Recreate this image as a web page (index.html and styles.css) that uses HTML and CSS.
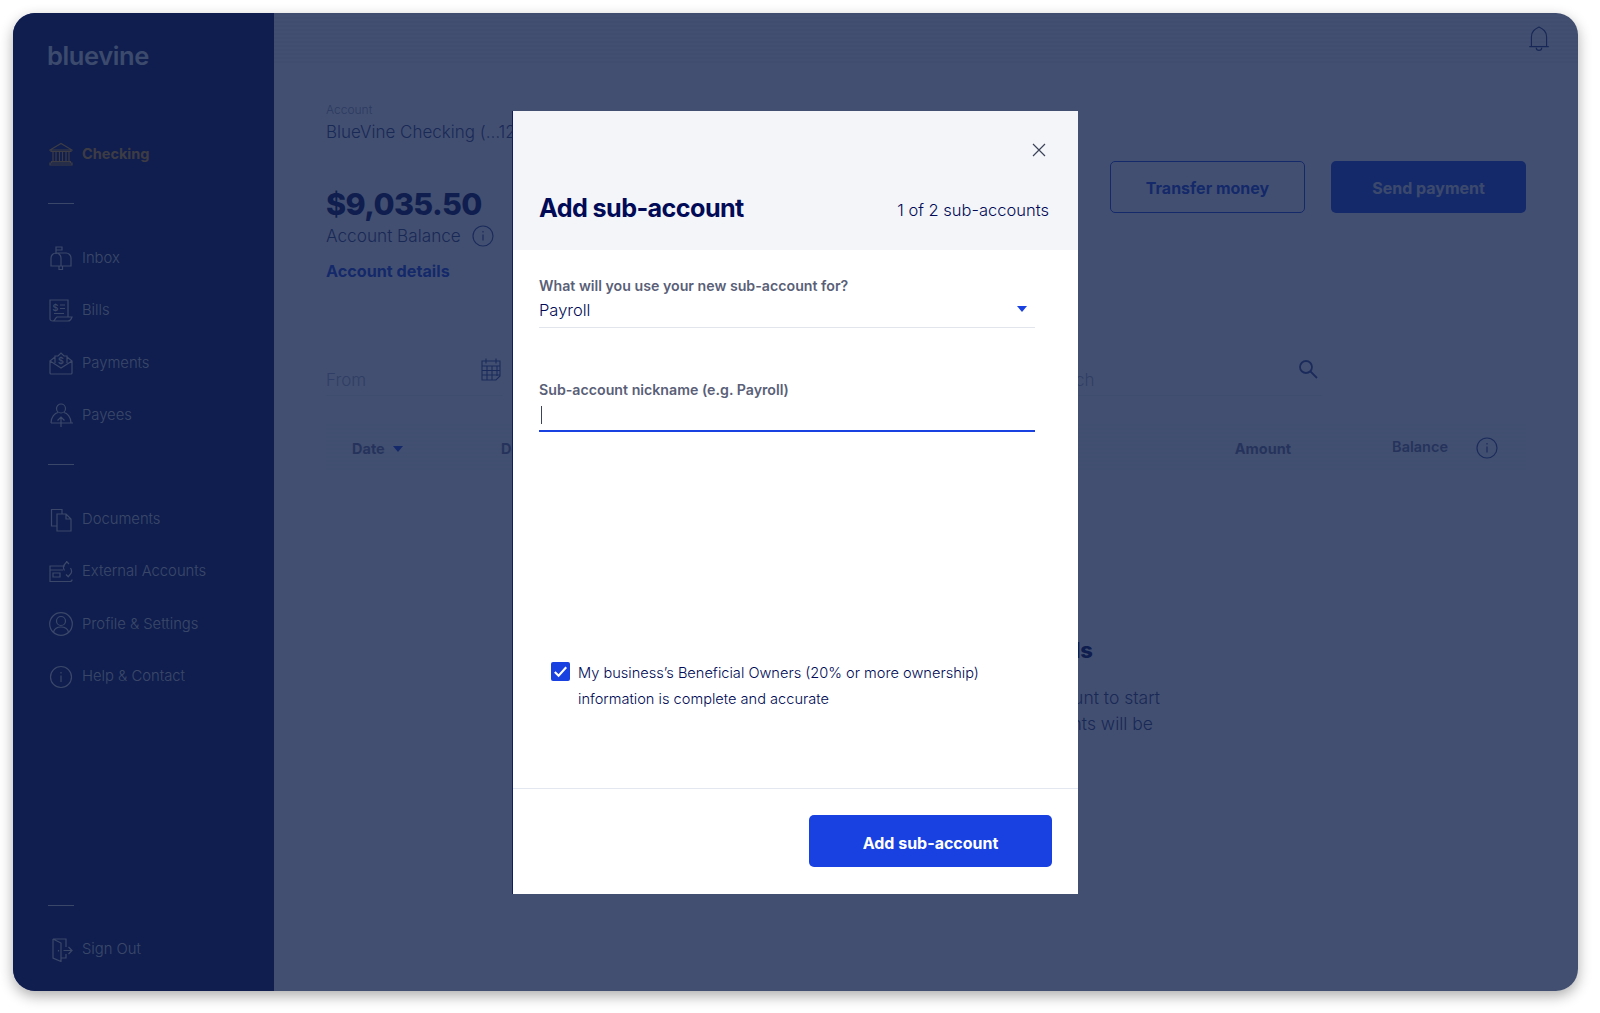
FILE: index.html
```html
<!DOCTYPE html>
<html lang="en">
<head>
<meta charset="utf-8">
<title>Bluevine - Add sub-account</title>
<link rel="stylesheet" href="styles.css">
</head>
<body>
<div class="window">
  <aside class="sidebar">
    <div class="logo">bluevine</div>
    <nav class="nav">
      <a class="nav-item active">
        <svg class="nav-icon" viewBox="0 0 24 24"><path d="M1 8 12 1.500 23 8ZM2 8v1.500h20V8M4 10v9M7 10v9M10.500 10v9M13.500 10v9M17 10v9M20 10v9M2.500 19.500h19v1.500h-19ZM1 21h22v2H1Z"/></svg>
        <span>Checking</span>
      </a>
      <div class="nav-sep"></div>
      <a class="nav-item">
        <svg class="nav-icon" viewBox="0 0 24 24"><path d="M7 8V1h6v3H7M2 20v-8a5 5 0 0 1 5-5 5 5 0 0 1 5 5v8ZM7 7h10a5 5 0 0 1 5 5v8H12M10 20v3.500h3.500V20"/></svg>
        <span>Inbox</span>
      </a>
      <a class="nav-item">
        <svg class="nav-icon" viewBox="0 0 24 24"><path d="M4 22c-2 0-3-1-3-2V1h18v17M4 22c2 0 2-3 4-4h15c-1 3-2 4-4 4ZM5 14.500h10M11 6h5M11 9.500h5"/><text class="bill-sign" x="3.500" y="11.500">$</text></svg>
        <span>Bills</span>
      </a>
      <a class="nav-item">
        <svg class="nav-icon" viewBox="0 0 24 24"><path d="M1 10v12a1 1 0 0 0 1 1h20a1 1 0 0 0 1-1V10l-5-4M6 6l-5 4 11 7 11-7M6 12V5h3l3-3 3 3h3v7"/><text class="bill-sign" x="9" y="12.500">$</text></svg>
        <span>Payments</span>
      </a>
      <a class="nav-item">
        <svg class="nav-icon" viewBox="0 0 24 24"><circle cx="12" cy="5.500" r="4.500"/><path d="M2 20c0-6 4-10 7-10.500M22 20c0-6-4-10-7-10.500M2 20h22M12 24V14M8.500 17.500 12 14l3.500 3.500"/></svg>
        <span>Payees</span>
      </a>
      <div class="nav-sep"></div>
      <a class="nav-item">
        <svg class="nav-icon" viewBox="0 0 24 24"><path d="M8 18H2.500V1.500H13V6M8 6v17h14V11l-5-5ZM17 6v5h5"/></svg>
        <span>Documents</span>
      </a>
      <a class="nav-item">
        <svg class="nav-icon" viewBox="0 0 24 24"><path d="M16 6H1v15.500h20a2 2 0 0 0 2-2M1 10h13M4 13h7v4H4ZM18 1.500 15 5c-1 2-.5 4 .5 5.500M17.500 1.500 20 4M19 17l3-3.500c1-2 .5-4-.5-5.500M19.500 17 17 14.500"/></svg>
        <span>External Accounts</span>
      </a>
      <a class="nav-item">
        <svg class="nav-icon" viewBox="0 0 24 24"><circle cx="12" cy="12" r="11.300"/><circle cx="12" cy="9" r="4.500"/><path d="M4.500 20c1-3.500 4-5 7.500-5s6.500 1.500 7.500 5"/></svg>
        <span>Profile &amp; Settings</span>
      </a>
      <a class="nav-item">
        <svg class="nav-icon" viewBox="0 0 24 24"><circle cx="12" cy="12" r="10.500"/><path d="M12 10.500V17M12 7v1.500"/></svg>
        <span>Help &amp; Contact</span>
      </a>
    </nav>
    <div class="nav-bottom">
      <div class="nav-sep"></div>
      <a class="nav-item">
        <svg class="nav-icon" viewBox="0 0 24 24"><path d="M4 1v19l8 3.500V5L4 1h13v8M12 20h5v-4M14.500 12.500H23M19.500 9l3.500 3.500-3.500 3.500M9.500 12v1.500"/></svg>
        <span>Sign Out</span>
      </a>
    </div>
  </aside>

  <main class="main">
    <header class="topbar">
      <svg class="bell" viewBox="0 0 20 24"><path d="M10 1c-4 2-7 4-7 9v9H1h18-2v-9c0-5-3-7-7-9ZM7.500 20a2.500 2.500 0 0 0 5 0"/></svg>
    </header>
    <div class="content">
      <section class="summary">
        <div class="account">
          <div class="account-label">Account</div>
          <div class="account-name">BlueVine Checking (…1234)</div>
          <div class="amount">$9,035.50</div>
          <div class="balance-row">
            <span>Account Balance</span>
            <svg class="info" viewBox="0 0 22 22"><circle cx="11" cy="11" r="10"/><path d="M11 9.500v6M11 6v1.500"/></svg>
          </div>
          <a class="details-link">Account details</a>
        </div>
        <div class="actions">
          <a class="btn btn-outline">Transfer money</a>
          <a class="btn btn-solid">Send payment</a>
        </div>
      </section>

      <section class="filters">
        <div class="field field-from">
          <span>From</span>
          <svg class="cal" viewBox="0 0 22 24"><path d="M2 4h18v15l-4 4H2ZM2 9h18M7 9v14M12 9v14M17 9v10M2 13.500h18M2 18h18M6 1.500v5M16 1.500v5"/></svg>
        </div>
        <div class="field field-search">
          <span>Search</span>
          <svg class="search" viewBox="0 0 20 20"><circle cx="8" cy="8" r="6"/><path d="m12.500 12.500 6.500 6.500"/></svg>
        </div>
      </section>

      <section class="table-head">
        <div class="th th-date">Date <i class="sort"></i></div>
        <div class="th th-desc">Description</div>
        <div class="th th-amount">Amount</div>
        <div class="th th-balance">Balance</div>
        <svg class="info info-table" viewBox="0 0 22 22"><circle cx="11" cy="11" r="10"/><path d="M11 9.500v6M11 6v1.500"/></svg>
      </section>

      <section class="empty">
        <h2>details</h2>
        <p class="empty-line">your account to start</p>
        <p class="empty-line empty-line-second">payments will be</p>
      </section>
    </div>
  </main>

  <div class="overlay">
    <div class="modal">
      <div class="modal-head">
        <svg class="close" viewBox="0 0 14 14"><path d="m1 1 12 12M13 1 1 13"/></svg>
        <div class="modal-title-row">
          <h1>Add sub-account</h1>
          <span class="count">1 of 2 sub-accounts</span>
        </div>
      </div>
      <div class="modal-body">
        <div class="form-field">
          <label class="form-label">What will you use your new sub-account for?</label>
          <div class="select">
            <span>Payroll</span>
            <i class="select-arrow"></i>
          </div>
        </div>
        <div class="form-field form-field-second">
          <label class="form-label">Sub-account nickname (e.g. Payroll)</label>
          <div class="text-input"><i class="caret"></i></div>
        </div>
        <div class="consent">
          <span class="checkbox">
            <svg viewBox="0 0 20 20"><path d="m4 10.500 4 4 8-9"/></svg>
          </span>
          <p>My business’s Beneficial Owners (20% or more ownership) information is complete and accurate</p>
        </div>
      </div>
      <div class="modal-foot">
        <a class="submit">Add sub-account</a>
      </div>
    </div>
  </div>
</div>
</body>
</html>
```

FILE: styles.css
```css
* { box-sizing: border-box; }
html, body { margin: 0; height: 100%; }
body {
  background: #fff;
  font-family: "Inter", "Liberation Sans", sans-serif;
  font-weight: 300;
  overflow: hidden;
}
h1, h2, p { margin: 0; }

.window {
  position: relative;
  display: flex;
  width: 1565px;
  height: 978px;
  margin: 13px 0 0 13px;
  border-radius: 22px;
  overflow: hidden;
  background: #fff;
  box-shadow: 0 5px 14px rgba(0, 0, 0, .32);
}

/* Sidebar */
.sidebar {
  flex: 0 0 261px;
  display: flex;
  flex-direction: column;
  padding: 0 0 15px 35px;
  background: #000a56;
  color: #d8d8dc;
  font-size: 14.800px;
}
.logo {
  height: 115px;
  margin-left: -1px;
  padding: 26px 0 0 0;
  font-size: 25.500px;
  line-height: 34px;
  font-weight: 600;
  letter-spacing: -.4px;
  color: #dfe3ee;
}
.nav-item {
  display: flex;
  align-items: center;
  gap: 9px;
  height: 52.300px;
}
.nav-item span { margin-top: -1px; }
.nav-icon {
  flex: none;
  width: 24px;
  height: 24px;
  margin-left: 1px;
  fill: none;
  stroke: currentColor;
  stroke-width: 1.200;
}
.bill-sign {
  font-size: 9px;
  font-weight: 600;
  fill: currentColor;
  stroke: none;
}
.active {
  color: #e6a128;
  font-weight: 700;
  font-size: 14.500px;
}
.nav-sep {
  width: 26px;
  height: 1px;
  margin: 23px 0 28px;
  background: #d8d8dc;
}
.nav-bottom { margin-top: auto; }
.nav-bottom .nav-sep { margin: 0 0 18px; }

/* Main */
.main {
  flex: 1;
  display: flex;
  flex-direction: column;
  min-width: 0;
}
.topbar {
  flex: none;
  display: flex;
  justify-content: flex-end;
  align-items: flex-start;
  height: 52px;
  padding: 13px 28px 0 0;
  background: repeating-linear-gradient(0deg, #fff 0 2px, #f5f6f8 2px 4px);
}
.bell {
  width: 22px;
  height: 26px;
  fill: none;
  stroke: #2a3a80;
  stroke-width: 1.100;
}
.content {
  flex: 1;
  padding: 0 52px;
}
.summary {
  display: flex;
  justify-content: space-between;
}
.account { padding-top: 37px; }
.account-label {
  font-size: 12px;
  line-height: 16px;
  color: #8f96b8;
}
.account-name {
  width: 300px;
  margin-top: 2px;
  font-size: 17px;
  line-height: 24px;
  white-space: nowrap;
  color: #36407f;
}
.amount {
  margin-top: 39px;
  font-size: 30.500px;
  line-height: 42px;
  font-weight: 800;
  letter-spacing: -.6px;
  color: #000a56;
}
.balance-row {
  display: flex;
  align-items: center;
  gap: 11px;
  margin-top: -1px;
  font-size: 17.200px;
  line-height: 24px;
  color: #36407f;
}
.info {
  width: 22px;
  height: 22px;
  fill: none;
  stroke: #3a4a98;
  stroke-width: 1.200;
}
.details-link {
  display: block;
  margin-top: 11px;
  font-size: 16.200px;
  line-height: 24px;
  font-weight: 700;
  color: #1941e1;
}
.actions {
  display: flex;
  gap: 26px;
  padding-top: 96px;
}
.btn {
  display: flex;
  align-items: center;
  justify-content: center;
  width: 195px;
  height: 52px;
  padding-top: 2px;
  border-radius: 5px;
  font-size: 16px;
  font-weight: 700;
}
.btn-outline {
  border: 1px solid #1941e1;
  color: #1941e1;
}
.btn-solid {
  background: #1941e1;
  color: #dfe2ee;
}

.filters {
  display: flex;
  margin-top: 66px;
}
.field {
  display: flex;
  justify-content: space-between;
  align-items: flex-start;
  height: 47px;
  border-bottom: 1px solid #eceef3;
  font-size: 17px;
  color: #a4a8c6;
}
.field span { padding-top: 19px; line-height: 24px; }
.field-from { width: 177px; padding-right: 1px; }
.field-search { width: 283px; margin-left: 536px; padding: 0 4px 0 0; }
.cal {
  width: 22px;
  height: 24px;
  margin-top: 8px;
  fill: none;
  stroke: #3a4a98;
  stroke-width: 1.100;
}
.search {
  width: 20px;
  height: 20px;
  margin-top: 10px;
  fill: none;
  stroke: #3a4a98;
  stroke-width: 1.800;
}

.table-head {
  display: flex;
  align-items: center;
  height: 48px;
  margin-top: 28px;
  padding-left: 26px;
  background: repeating-linear-gradient(0deg, #fff 0 2px, #f6f7f9 2px 4px);
  font-size: 14.500px;
  font-weight: 700;
  color: #6f7599;
}
.th { white-space: nowrap; }
.th-date { width: 149px; }
.sort {
  display: inline-block;
  width: 0;
  height: 0;
  margin: 0 0 2px 5px;
  border: 5.500px solid transparent;
  border-top: 6px solid #1941e1;
  border-bottom: 0;
}
.th-amount { margin-left: auto; margin-right: 101px; }
.th-balance { margin: -4px 28px 0 0; font-weight: 600; }
.info-table { margin-right: 28px; }

.empty {
  margin: 162px 366px 0 0;
  text-align: right;
  color: #36407f;
  font-size: 17.500px;
  line-height: 26px;
}
.empty h2 {
  margin: 0 67px 19px 0;
  font-size: 22px;
  line-height: 32px;
  font-weight: 800;
  color: #000a56;
}
.empty-line-second { margin-right: 7px; }

/* Modal */
.overlay {
  position: absolute;
  inset: 0;
  padding: 98px 0 0 500px;
  background: rgba(19, 35, 76, .8);
}
.modal {
  display: flex;
  flex-direction: column;
  width: 565px;
  height: 783px;
  background: #fff;
  color: #000a56;
  box-shadow: -1px 0 0 #0d1d60;
}
.modal-head {
  flex: none;
  height: 139px;
  padding: 32px 29px 0 26px;
  background: #f4f5f9;
}
.close {
  display: block;
  width: 14px;
  height: 14px;
  margin: 0 3px 0 auto;
  fill: none;
  stroke: #3c4259;
  stroke-width: 1.200;
}
.modal-title-row {
  display: flex;
  justify-content: space-between;
  align-items: center;
  margin-top: 31px;
}
.modal-title-row h1 {
  font-size: 25.200px;
  line-height: 40px;
  font-weight: 700;
  letter-spacing: -.6px;
}
.count {
  font-size: 16.500px;
  padding-top: 4px;
}
.modal-body {
  flex: 1;
  padding: 26px 43px 0 26px;
}
.form-label {
  display: block;
  font-size: 14.200px;
  line-height: 20px;
  font-weight: 600;
  color: #5a5f78;
}
.select {
  display: flex;
  justify-content: space-between;
  align-items: center;
  height: 32px;
  padding: 0 8px 4px 0;
  border-bottom: 1px solid #e3e5ec;
  font-size: 16.500px;
  font-weight: 300;
}
.select-arrow {
  width: 0;
  height: 0;
  margin-bottom: 2px;
  border: 5.500px solid transparent;
  border-top: 6px solid #1941e1;
  border-bottom: 0;
}
.form-field-second { margin-top: 52px; }
.text-input {
  display: flex;
  align-items: center;
  height: 32px;
  padding: 0 0 0 2px;
  border-bottom: 2px solid #1941e1;
}
.caret {
  width: 1px;
  height: 18px;
  background: #3c4259;
}
.consent {
  display: flex;
  gap: 8px;
  width: 450px;
  margin: 230px 0 0 12px;
}
.checkbox {
  flex: none;
  width: 19px;
  height: 19px;
  border-radius: 2px;
  background: #1941e1;
}
.checkbox svg {
  display: block;
  fill: none;
  stroke: #fff;
  stroke-width: 2.200;
}
.consent p {
  margin-top: -2px;
  font-size: 14.600px;
  line-height: 26px;
}
.modal-foot {
  flex: none;
  display: flex;
  justify-content: flex-end;
  height: 106px;
  padding: 26px 26px 0 0;
  border-top: 1px solid #e3e7f0;
}
.submit {
  display: flex;
  align-items: center;
  justify-content: center;
  width: 243px;
  height: 52px;
  padding-top: 3px;
  border-radius: 5px;
  background: #1941e1;
  color: #fff;
  font-size: 16px;
  font-weight: 700;
}
```
